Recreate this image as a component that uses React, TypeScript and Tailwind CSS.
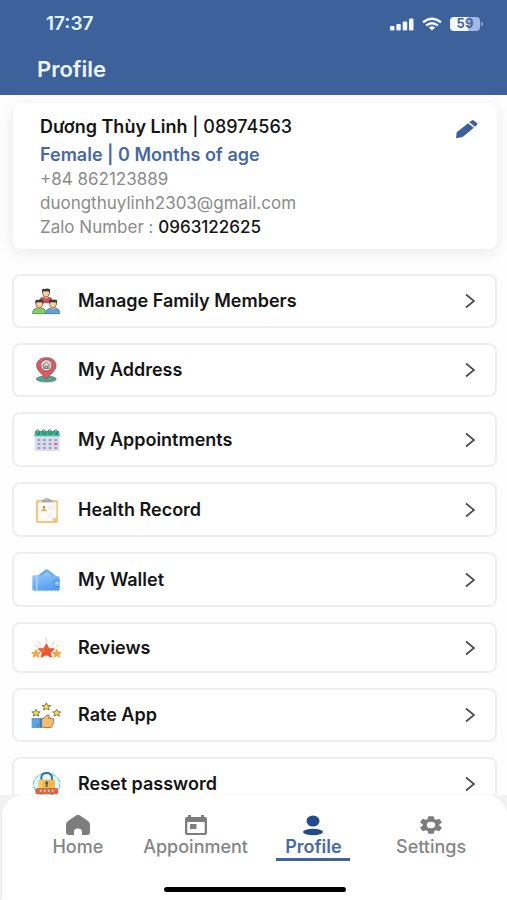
import type { ReactNode } from "react";
import clsx from "clsx";

const STAR = "M0 -10 L3 -3.4 L10 -3 L4.7 1.7 L6.4 8.8 L0 5 L-6.4 8.8 L-4.7 1.7 L-10 -3 L-3 -3.4 Z";

function MenuIcon({ children }: { children: ReactNode }) {
  return (
    <svg viewBox="0 0 90 84" className="h-7 w-[30px] shrink-0" aria-hidden="true">
      {children}
    </svg>
  );
}

function Person({ x, y, shirt }: { x: number; y: number; shirt: string }) {
  return (
    <g transform={`translate(${x} ${y})`}>
      <path d="M-20 42 V36 Q-18 27 -8 25 L0 31 L8 25 Q18 27 20 36 V42 Z" fill={shirt} stroke="#39424a" strokeWidth="1.5" />
      <path d="M-5 20 H5 V27 L0 31 L-5 27 Z" fill="#e8b47c" />
      <path d="M-10 6 H10 V15 Q9 24 0 25 Q-9 24 -10 15 Z" fill="#f8d29b" stroke="#4b3b35" strokeWidth="2" />
      <path d="M-12 13 V3 Q-9 -1 -4 1 Q5 -3 12 2 V13 L8 8 H-8 Z" fill="#41383a" />
    </g>
  );
}

function FamilyIcon() {
  return (
    <MenuIcon>
      <Person x={45} y={5} shirt="#df4b55" />
      <Person x={25} y={38} shirt="#78d75d" />
      <Person x={66} y={38} shirt="#55a4e5" />
    </MenuIcon>
  );
}

function AddressIcon() {
  return (
    <MenuIcon>
      <ellipse cx="46" cy="69" rx="30" ry="9" fill="#55a28f" stroke="#477568" strokeWidth="2" />
      <path d="M46 71 C39 57 17 45 17 29 C17 14 29 5 46 5 C63 5 75 14 75 29 C75 45 53 57 46 71 Z" fill="#dc5b61" stroke="#8b5057" strokeWidth="2.5" />
      <circle cx="46" cy="28" r="17" fill="#e8dddd" stroke="#765258" strokeWidth="2.5" />
      <path d="M34 29 L46 18 L58 29 M38 27 V37 H54 V27 M43 37 V30 H49 V37" fill="none" stroke="#655b60" strokeWidth="2.5" />
    </MenuIcon>
  );
}

function CalendarIcon() {
  return (
    <MenuIcon>
      <rect x="11" y="18" width="75" height="57" rx="3" fill="#dcdff0" />
      <path d="M10 31 L13 15 H84 L87 31 Z" fill="#3fbd99" />
      {[20, 38, 56, 74].map((x) => (
        <g key={x}>
          <path d={`M${x - 4} 23 C${x - 10} 8 ${x + 10} 8 ${x + 5} 23`} fill="none" stroke="#35675e" strokeWidth="3" />
          <circle cx={x + 2} cy="24" r="3" fill="#267864" />
        </g>
      ))}
      {[38, 50, 62].map((y) =>
        [17, 34, 51, 68].map((x) => (
          <g key={`${x}-${y}`}>
            <rect x={x} y={y} width="12" height="8" rx="1" fill={x === 68 && y === 50 ? "#ef8798" : "#c3c6dd"} />
            <rect x={x + 4} y={y + 2} width="5" height="4" fill={x === 68 || y === 62 ? "#b36583" : "#7579a5"} />
          </g>
        )),
      )}
    </MenuIcon>
  );
}

function RecordIcon() {
  return (
    <MenuIcon>
      <rect x="15" y="12" width="66" height="69" rx="5" fill="#efc77e" />
      <path d="M21 19 H76 V65 L65 75 H21 Z" fill="#fbfaf8" />
      <path d="M65 75 V65 H76 Z" fill="#d8c7a8" />
      <path d="M33 19 V14 Q34 10 41 10 Q42 5 48 5 Q54 5 55 10 Q64 10 65 15 V19 Z" fill="#a9a9ad" />
      <circle cx="48" cy="10" r="2" fill="#eeeeee" />
      <circle cx="39" cy="34" r="4" fill="#c08b50" />
      <path d="M30 46 Q32 38 39 38 Q46 38 48 46 Z" fill="#e9b33c" />
      <path d="M52 30 H67 M52 37 H66 M50 62 L64 52" stroke="#e4e3e6" strokeWidth="3" />
    </MenuIcon>
  );
}

function WalletIcon() {
  return (
    <MenuIcon>
      <defs>
        <linearGradient id="wallet" x1="0" y1="0" x2="0.4" y2="1">
          <stop offset="0" stopColor="#91c4fa" />
          <stop offset="1" stopColor="#579cf0" />
        </linearGradient>
      </defs>
      <path d="M16 32 L42 12 Q47 8 52 12 L78 32 Z" fill="#66aaf2" />
      <path d="M27 32 L49 17 L66 32 Z" fill="#8dc7fb" />
      <path d="M4 32 Q4 27 10 28 L80 30 Q86 31 86 38 V68 Q86 75 79 75 H11 Q4 75 4 69 Z" fill="url(#wallet)" />
      <path d="M15 30 H20 V75 H15 Z" fill="#b1d9fd" opacity="0.8" />
      <path d="M6 69 Q9 74 16 74 H79" fill="none" stroke="#99cdfb" strokeWidth="3" />
      <path d="M86 42 H78 Q67 44 67 52 Q67 60 78 62 H86" fill="#75b7f8" stroke="#417fca" strokeWidth="2.5" />
      <circle cx="78" cy="52" r="3" fill="#a9d3fd" />
    </MenuIcon>
  );
}

function ReviewsIcon() {
  return (
    <MenuIcon>
      <path d="M46 14 V25 M22 23 L29 33 M70 23 L63 33 M12 34 L19 39 M81 34 L74 39" stroke="#efbd84" strokeWidth="2.5" strokeLinecap="round" />
      <path d={STAR} transform="translate(15 59) scale(1.25 1.15)" fill="#efaa43" stroke="#efaa43" strokeWidth="3" strokeLinejoin="round" />
      <path d={STAR} transform="translate(77 59) scale(1.25 1.15)" fill="#efaa43" stroke="#efaa43" strokeWidth="3" strokeLinejoin="round" />
      <path d={STAR} transform="translate(46 51) scale(2.3 2)" fill="#eb5530" stroke="#eb5530" strokeWidth="2" strokeLinejoin="round" />
      <path d="M46 34 L40 47 L27 48 L39 54 Z" fill="#f98358" />
    </MenuIcon>
  );
}

function RateIcon() {
  return (
    <MenuIcon>
      <path d={STAR} transform="translate(46 17) scale(1.3 1.15)" fill="#f5de50" stroke="#6d713d" strokeWidth="2.2" />
      <path d={STAR} transform="translate(15 36) scale(1.25 1.1)" fill="#f5de50" stroke="#6d713d" strokeWidth="2.2" />
      <path d={STAR} transform="translate(77 36) scale(1.25 1.1)" fill="#f5de50" stroke="#6d713d" strokeWidth="2.2" />
      <path d="M2 53 H32 V79 H2 Z" fill="#5aa5e7" />
      <path d="M2 53 H32 M2 79 H32" stroke="#40617e" strokeWidth="2" />
      <circle cx="20" cy="71" r="2" fill="#28557a" />
      <path d="M32 53 Q41 53 47 43 Q54 38 55 46 L53 52 H64 Q71 53 68 60 Q69 64 66 67 Q67 71 64 73 Q63 80 57 80 H41 Q36 80 32 77 Z" fill="#f7bd72" stroke="#73532f" strokeWidth="2.2" strokeLinejoin="round" />
      <path d="M26 52 H33 V80 H26 Z" fill="#427eb6" />
    </MenuIcon>
  );
}

function LockIcon() {
  return (
    <MenuIcon>
      <ellipse cx="47" cy="43" rx="40" ry="34" fill="#dff7f9" stroke="#58bdd0" strokeWidth="3" strokeDasharray="15 4" />
      <path d="M31 32 V23 Q32 9 47 9 Q62 9 63 23 V32" fill="none" stroke="#38728f" strokeWidth="6" />
      <rect x="23" y="29" width="49" height="34" rx="4" fill="#f4b745" />
      <path d="M23 33 Q23 29 27 29 H35 V63 H23 Z" fill="#f7ca68" />
      <circle cx="47" cy="38" r="4.5" fill="#385d72" />
      <path d="M45 39 H49 L50 50 H44 Z" fill="#385d72" />
      <rect x="13" y="54" width="69" height="19" rx="6" fill="#d96846" />
      {[29, 41, 53, 65].map((x) => (
        <circle key={x} cx={x} cy="62" r="3" fill="#ffe1b8" />
      ))}
    </MenuIcon>
  );
}

const MENU = [
  { label: "Manage Family Members", icon: <FamilyIcon />, size: "h-[54px]" },
  { label: "My Address", icon: <AddressIcon />, size: "h-[54px]" },
  { label: "My Appointments", icon: <CalendarIcon />, size: "h-[55px]" },
  { label: "Health Record", icon: <RecordIcon />, size: "h-[55px]" },
  { label: "My Wallet", icon: <WalletIcon />, size: "h-[55px]" },
  { label: "Reviews", icon: <ReviewsIcon />, size: "h-[51px]" },
  { label: "Rate App", icon: <RateIcon />, size: "h-[54px]" },
  { label: "Reset password", icon: <LockIcon />, size: "h-[54px]" },
];

function StatusBar() {
  return (
    <div className="flex h-12 items-center justify-between pr-6 pl-[46px]">
      <span className="text-[19px] font-semibold text-[#e4f5ff]">17:37</span>
      <div className="flex items-center gap-2 text-[#f1f8ff]">
        <svg viewBox="0 0 24 13" className="h-[13px] w-6" fill="currentColor" aria-hidden="true">
          <rect x="0" y="8" width="4.5" height="4.5" rx="1" />
          <rect x="6.3" y="6" width="4.5" height="6.5" rx="1" />
          <rect x="12.7" y="3.5" width="4.5" height="9" rx="1" />
          <rect x="19" y="0.5" width="4.5" height="12" rx="1" />
        </svg>
        <svg viewBox="0 0 20 14" className="h-3.5 w-5" fill="none" stroke="currentColor" strokeWidth="2.4" aria-hidden="true">
          <path d="M1 5.2 Q10 -1.8 19 5.2" />
          <path d="M4.2 8.5 Q10 3.8 15.8 8.5" />
          <path d="M6.8 10.5 Q10 8 13.2 10.5 L10 13.5 Z" fill="currentColor" stroke="none" />
        </svg>
        <div className="flex items-center gap-px">
          <span className="flex h-3.5 w-[30px] items-center justify-center rounded bg-linear-to-r from-[#f3faff] from-60% to-[#9fb9e0] to-60% text-[13px] font-bold text-[#4b6594]">
            59
          </span>
          <span className="h-1 w-0.5 rounded-r bg-[#8daada]" />
        </div>
      </div>
    </div>
  );
}

function ProfileCard() {
  return (
    <section className="mr-2.5 ml-[13px] flex items-start justify-between rounded-lg bg-white pt-3 pr-[18px] pb-2.5 pl-[27px] shadow-[0_3px_16px_rgba(0,0,0,0.09)]">
      <div className="text-[17px] leading-6 text-[#8b8b8b]">
        <h2 className="text-lg leading-6 font-medium text-[#151515]">
          <span className="font-semibold">Dương Thùy Linh</span> | 08974563
        </h2>
        <p className="pt-1 text-lg leading-6 font-semibold text-[#48689f]">Female | 0 Months of age</p>
        <p>+84 862123889</p>
        <p>duongthuylinh2303@gmail.com</p>
        <p>
          Zalo Number : <span className="font-medium text-[#151515]">0963122625</span>
        </p>
      </div>
      <button type="button" aria-label="Edit profile" className="mt-1 text-[#3d609c]">
        <svg viewBox="-1 -1 24 20" className="h-5 w-6" fill="currentColor" aria-hidden="true">
          <path d="M0 18.3 L0.7 12.3 L12 3.2 L17.8 7.8 L6.7 17 Z" />
          <path d="M13.3 2.2 L15.7 0.4 Q16.7 -0.3 17.7 0.4 L21 3 Q21.9 3.9 21 4.8 L19.1 6.8 Z" />
        </svg>
      </button>
    </section>
  );
}

function HomeIcon() {
  return (
    <svg viewBox="0 0 24 22" className="h-[22px] w-6" fill="currentColor" aria-hidden="true">
      <path d="M2 7 L10 1.5 Q12 0.2 14 1.5 L22 7 Q24 8.5 24 10.5 V18 Q24 21 21 21 H16 V17 Q15.6 14.5 12 14.5 Q8.4 14.5 8 17 V21 H3 Q0 21 0 18 V10.5 Q0 8.5 2 7 Z" />
    </svg>
  );
}

function AppointmentIcon() {
  return (
    <svg viewBox="0 0 24 22" className="h-[22px] w-6" fill="currentColor" aria-hidden="true">
      <path fillRule="evenodd" d="M4 1 H7 V3 H17 V1 H20 V3 H21 Q23 3 23 5 V19 Q23 21 21 21 H3 Q1 21 1 19 V5 Q1 3 3 3 H4 Z M3.3 8 V19 H20.7 V8 Z" />
      <rect x="6" y="10" width="6.5" height="5" />
    </svg>
  );
}

function ProfileIcon() {
  return (
    <svg viewBox="0 0 24 22" className="h-[22px] w-6" fill="currentColor" aria-hidden="true">
      <ellipse cx="12" cy="7" rx="6.5" ry="5.5" />
      <ellipse cx="12" cy="18" rx="10" ry="3.3" />
    </svg>
  );
}

function SettingsIcon() {
  return (
    <svg viewBox="0 0 24 24" preserveAspectRatio="none" className="h-[22px] w-7" fill="currentColor" aria-hidden="true">
      <path d="M19.14 12.94c.04-.3.06-.61.06-.94s-.02-.64-.07-.94l2.03-1.58a.49.49 0 0 0 .12-.61l-1.92-3.32a.49.49 0 0 0-.59-.22l-2.39.96a7.03 7.03 0 0 0-1.62-.94l-.36-2.54A.48.48 0 0 0 13.92 2.4h-3.84a.48.48 0 0 0-.47.41l-.36 2.54c-.59.24-1.13.57-1.62.94l-2.39-.96a.49.49 0 0 0-.59.22L2.74 8.87a.49.49 0 0 0 .12.61l2.03 1.58c-.05.3-.09.63-.09.94s.02.64.07.94l-2.03 1.58a.49.49 0 0 0-.12.61l1.92 3.32c.12.22.37.29.59.22l2.39-.96c.5.38 1.03.7 1.62.94l.36 2.54c.05.24.24.41.48.41h3.84c.24 0 .44-.17.47-.41l.36-2.54c.59-.24 1.13-.56 1.62-.94l2.39.96c.22.08.47 0 .59-.22l1.92-3.32a.49.49 0 0 0-.12-.61zM12 15.6a3.6 3.6 0 1 1 0-7.2 3.6 3.6 0 0 1 0 7.2z" />
    </svg>
  );
}

const TABS = [
  { label: "Home", icon: <HomeIcon /> },
  { label: "Appoinment", icon: <AppointmentIcon /> },
  { label: "Profile", icon: <ProfileIcon />, active: true },
  { label: "Settings", icon: <SettingsIcon /> },
];

function TabBar() {
  return (
    <nav className="shrink-0 bg-[#f2f2f2] pl-0.5">
      <div className="rounded-t-[20px] bg-white px-[17px] pt-[19px] pb-2 shadow-[0_0_2px_rgba(0,0,0,0.08)]">
        <div className="grid grid-cols-4">
          {TABS.map((tab) => (
            <a
              key={tab.label}
              href={`#${tab.label.toLowerCase()}`}
              aria-current={tab.active ? "page" : undefined}
              className={clsx(
                "flex flex-col items-center text-lg leading-[22px]",
                tab.active ? "font-semibold text-[#466aa5]" : "font-medium text-[#858585]",
              )}
            >
              <span className={tab.active ? "text-[#234b8c]" : "text-[#7d7d7d]"}>{tab.icon}</span>
              {tab.label}
              {tab.active && <span className="h-[3px] w-[74px] bg-[#41639c]" />}
            </a>
          ))}
        </div>
        <div className="mx-auto mt-[26px] h-[5px] w-[182px] rounded-full bg-black" />
      </div>
    </nav>
  );
}

export default function App() {
  return (
    <div className="flex h-screen flex-col overflow-hidden bg-[#fefefe] font-[Inter,sans-serif]">
      <header className="h-[95px] shrink-0 bg-[#3d629b]">
        <StatusBar />
        <h1 className="pl-[37px] text-[22px] leading-[42px] font-semibold text-[#eaf5ff]">Profile</h1>
      </header>
      <main className="min-h-0 flex-1 overflow-y-auto pt-2 [scrollbar-width:none]">
        <ProfileCard />
        <div className="mt-[25px] mr-2.5 ml-3 flex flex-col gap-[15px]">
          {MENU.map((item) => (
            <button
              key={item.label}
              type="button"
              className={clsx(
                "flex w-full shrink-0 items-center gap-[17px] rounded-lg border-2 border-[#eeeeee] bg-white pr-5 pl-[17px] text-left",
                item.size,
              )}
            >
              {item.icon}
              <span className="flex-1 text-lg font-semibold text-[#151515]">{item.label}</span>
              <svg viewBox="0 0 10 16" className="h-4 w-2.5" fill="none" stroke="#4a4a4a" strokeWidth="1.7" aria-hidden="true">
                <path d="M1 1.5 L9 8 L1 14.5" />
              </svg>
            </button>
          ))}
        </div>
      </main>
      <TabBar />
    </div>
  );
}
